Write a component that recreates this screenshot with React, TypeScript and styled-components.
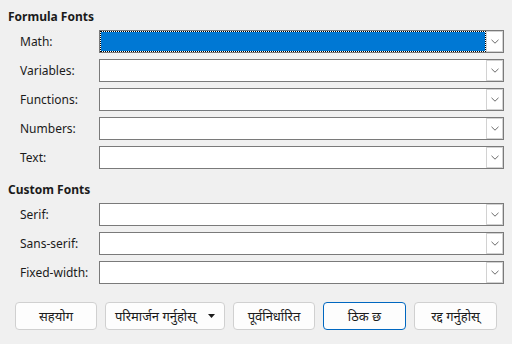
import React from "react";
import styled, { createGlobalStyle } from "styled-components";

const Global = createGlobalStyle`
  html, body { margin: 0; padding: 0; background: #f0f0f0; }
  body { font-family: "Noto Sans", "Noto Sans Devanagari", "DejaVu Sans", sans-serif; }
`;

const Page = styled.div`
  width: 512px;
  height: 344px;
  box-sizing: border-box;
  padding: 9px 9px 0 8px;
  background: #f0f0f0;
  color: #1b1b1b;
  font-size: 12px;
`;

const SectionTitle = styled.div<{ $top?: number }>`
  font-weight: 700;
  font-size: 12px;
  line-height: 16px;
  height: 16px;
  margin-top: ${(p) => p.$top ?? 0}px;
  margin-bottom: 5px;
`;

const Rows = styled.div`
  display: grid;
  grid-template-columns: 79px 405px;
  grid-auto-rows: 23px;
  row-gap: 6px;
  padding-left: 12px;
`;

const Label = styled.div`
  display: flex;
  align-items: center;
  font-size: 12px;
  white-space: nowrap;
`;

const Combo = styled.div`
  display: flex;
  box-sizing: border-box;
  border: 1px solid #7a7a7a;
  background: #fff;
  height: 23px;
`;

const Field = styled.div<{ $selected?: boolean }>`
  flex: 1;
  box-sizing: border-box;
  border: 1px dotted ${(p) => (p.$selected ? "#000" : "transparent")};
  background-color: ${(p) => (p.$selected ? "#0078d4" : "transparent")};
  background-clip: padding-box;
`;

const DropButton = styled.div`
  width: 17px;
  box-sizing: border-box;
  border: 1px solid #d2d2d2;
  background: #fff;
  display: flex;
  align-items: center;
  justify-content: center;
`;

const ButtonBar = styled.div`
  display: flex;
  gap: 8px;
  margin-top: 18px;
  padding-left: 7px;
`;

const Button = styled.button<{ $w: number; $default?: boolean }>`
  width: ${(p) => p.$w}px;
  height: 28px;
  box-sizing: border-box;
  border-radius: 4px;
  border: 1px solid ${(p) => (p.$default ? "#0067c0" : "#d0d0d0")};
  background: #fdfdfd;
  font-family: "Noto Sans", "Noto Sans Devanagari", "DejaVu Sans", sans-serif;
  font-size: 13px;
  color: #1b1b1b;
  display: flex;
  align-items: center;
  justify-content: center;
  gap: 12px;
  padding: 0 4px;
  white-space: nowrap;
`;

const Chevron = () => (
  <svg width="8" height="5" viewBox="0 0 8 5">
    <path d="M0.5 0.8 L4 4.2 L7.5 0.8" fill="none" stroke="#6a6a6a" strokeWidth="1" />
  </svg>
);

const Caret = () => (
  <svg width="7" height="4" viewBox="0 0 7 4">
    <path d="M0 0 H7 L3.5 4 Z" fill="#1b1b1b" />
  </svg>
);

const FontRow = ({ label, selected }: { label: string; selected?: boolean }) => (
  <>
    <Label>{label}</Label>
    <Combo>
      <Field $selected={selected} />
      <DropButton>
        <Chevron />
      </DropButton>
    </Combo>
  </>
);

export default function App() {
  return (
    <>
      <Global />
      <Page>
        <SectionTitle>Formula Fonts</SectionTitle>
        <Rows>
          <FontRow label="Math:" selected />
          <FontRow label="Variables:" />
          <FontRow label="Functions:" />
          <FontRow label="Numbers:" />
          <FontRow label="Text:" />
        </Rows>
        <SectionTitle $top={13}>Custom Fonts</SectionTitle>
        <Rows>
          <FontRow label="Serif:" />
          <FontRow label="Sans-serif:" />
          <FontRow label="Fixed-width:" />
        </Rows>
        <ButtonBar>
          <Button $w={82}>सहयोग</Button>
          <Button $w={120}>
            <span>परिमार्जन गर्नुहोस्</span>
            <Caret />
          </Button>
          <Button $w={82}>पूर्वनिर्धारित</Button>
          <Button $w={83} $default>
            ठिक छ
          </Button>
          <Button $w={83}>रद्द गर्नुहोस्</Button>
        </ButtonBar>
      </Page>
    </>
  );
}
